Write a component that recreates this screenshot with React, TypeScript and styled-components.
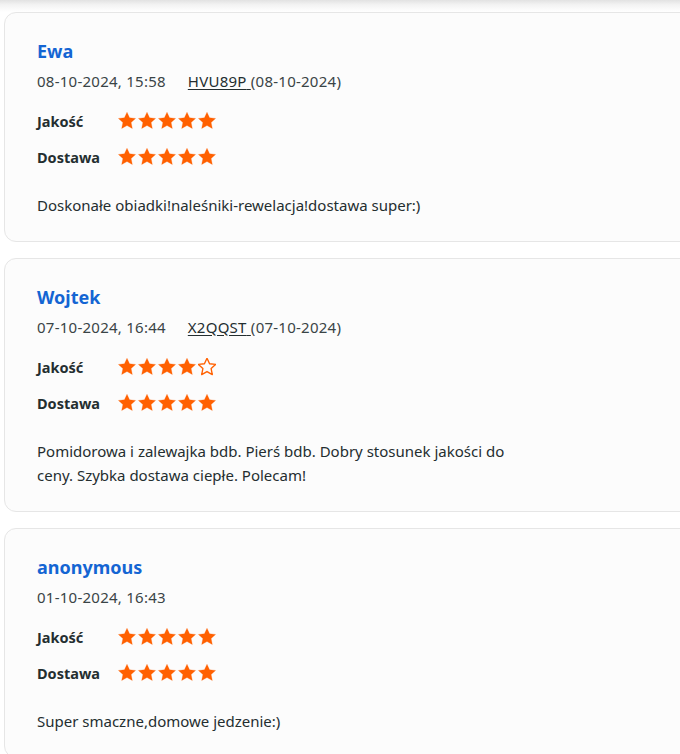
import React from 'react';
import styled, { createGlobalStyle } from 'styled-components';

type Review = {
  name: string;
  date: string;
  order?: string;
  orderDate?: string;
  quality: number;
  delivery: number;
  text: string;
};

const reviews: Review[] = [
  {
    name: 'Ewa',
    date: '08-10-2024, 15:58',
    order: 'HVU89P',
    orderDate: '08-10-2024',
    quality: 5,
    delivery: 5,
    text: 'Doskonałe obiadki!naleśniki-rewelacja!dostawa super:)',
  },
  {
    name: 'Wojtek',
    date: '07-10-2024, 16:44',
    order: 'X2QQST',
    orderDate: '07-10-2024',
    quality: 4,
    delivery: 5,
    text: 'Pomidorowa i zalewajka bdb. Pierś bdb. Dobry stosunek jakości do ceny. Szybka dostawa ciepłe. Polecam!',
  },
  {
    name: 'anonymous',
    date: '01-10-2024, 16:43',
    quality: 5,
    delivery: 5,
    text: 'Super smaczne,domowe jedzenie:)',
  },
];

const STAR = 'M12 1.8l3 6.4 7 .8-5.2 4.8 1.4 7L12 17.3l-6.2 3.5 1.4-7L2 9l7-.8z';

const Star: React.FC<{ filled: boolean }> = ({ filled }) => (
  <StarSvg viewBox="1.5 1.5 21 21">
    <path
      d={STAR}
      fill={filled ? '#ff6000' : 'none'}
      stroke="#ff6000"
      strokeWidth={filled ? 0.3 : 1.6}
      strokeLinejoin="round"
    />
  </StarSvg>
);

const Stars: React.FC<{ value: number }> = ({ value }) => (
  <StarRow>
    {[0, 1, 2, 3, 4].map((i) => (
      <Star key={i} filled={i < value} />
    ))}
  </StarRow>
);

const ReviewCard: React.FC<{ review: Review }> = ({ review }) => (
  <Card>
    <Name>{review.name}</Name>
    <Meta>
      <span>{review.date}</span>
      {review.order && (
        <Order>
          <a href="#">{review.order} </a>({review.orderDate})
        </Order>
      )}
    </Meta>
    <Ratings>
      <RatingRow>
        <Label>Jakość</Label>
        <Stars value={review.quality} />
      </RatingRow>
      <RatingRow>
        <Label>Dostawa</Label>
        <Stars value={review.delivery} />
      </RatingRow>
    </Ratings>
    <Comment>{review.text}</Comment>
  </Card>
);

const App: React.FC = () => (
  <>
    <GlobalStyle />
    <TopShadow />
    <List>
      {reviews.map((r) => (
        <ReviewCard key={r.name} review={r} />
      ))}
    </List>
  </>
);

const GlobalStyle = createGlobalStyle`
  html, body {
    margin: 0;
    overflow: hidden;
    background: #fff;
  }
  body {
    font-family: "Noto Sans", "Open Sans", sans-serif;
    color: #242e30;
  }
`;

const TopShadow = styled.div`
  height: 12px;
  background: linear-gradient(to bottom, #e2e2e2 0%, #f3f3f3 40%, #fff 100%);
`;

const List = styled.div`
  display: flex;
  flex-direction: column;
  gap: 16px;
  padding-left: 4px;
  width: 720px;
`;

const Card = styled.div`
  background: #fcfcfc;
  border: 1px solid #e6e6e6;
  border-radius: 12px;
  padding: 27px 32px 24px;
`;

const Name = styled.div`
  font-size: 18px;
  line-height: 22px;
  font-weight: 700;
  color: #1465d3;
`;

const Meta = styled.div`
  display: flex;
  gap: 22px;
  margin-top: 9px;
  font-size: 15px;
  line-height: 20px;
  color: #3a4446;
  letter-spacing: 0.25px;
`;

const Order = styled.span`
  a {
    color: #242e30;
    text-decoration: underline;
    text-underline-offset: 2px;
  }
`;

const Ratings = styled.div`
  display: flex;
  flex-direction: column;
  gap: 12px;
  margin-top: 18px;
`;

const RatingRow = styled.div`
  display: flex;
  align-items: center;
  height: 24px;
`;

const Label = styled.div`
  width: 81px;
  font-size: 14.5px;
  font-weight: 700;
  color: #242e30;
`;

const StarRow = styled.div`
  display: flex;
  gap: 2px;
`;

const StarSvg = styled.svg`
  width: 18px;
  height: 18px;
`;

const Comment = styled.p`
  margin: 24px 0 0;
  max-width: 480px;
  font-size: 15px;
  line-height: 24px;
  color: #242e30;
`;

export default App;
